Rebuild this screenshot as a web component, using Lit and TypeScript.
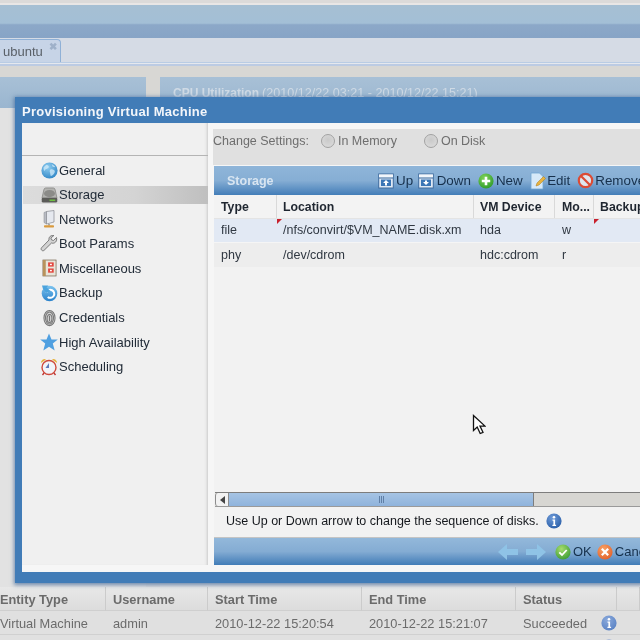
import { LitElement, html, css, svg } from "lit";
import { customElement } from "lit/decorators.js";

const disc = (id: string, a: string, b: string, inner: unknown, size = 16) => html`<svg class="ico" width=${size} height=${size} viewBox="0 0 16 16">
  <defs><radialGradient id=${id} cx="40%" cy="30%" r="75%"><stop offset="0" stop-color=${a}/><stop offset="1" stop-color=${b}/></radialGradient></defs>
  <circle cx="8" cy="8" r="7.6" fill="url(#${id})"/>${inner}</svg>`;

const winIcon = (down: boolean) => html`<svg class="ico" width="16" height="16" viewBox="0 0 16 16">
  <rect x="0.7" y="1" width="14.6" height="14" fill="#dfe9f4" stroke="#3f6c9e"/>
  <rect x="1" y="1.5" width="14" height="3" fill="#f2f6fb"/><path d="M1 5h14" stroke="#3f6c9e"/>
  <rect x="3" y="6.5" width="10" height="6.5" fill="#3a76b6"/>
  <path d=${down ? "M8 12l-3-3h2V7.5h2V9h2z" : "M8 7l3 3H9v2.5H7V10H5z"} fill="#fff"/></svg>`;

const infoGlyph = svg`<circle cx="8" cy="4.300" r="1.300" fill="#fff"/><path d="M6.500 6.600h2.600v5.200h1v1.200H6.400v-1.200h1V7.800h-.9z" fill="#fff"/>`;

const icons: Record<string, unknown> = {
  globe: disc("gl", "#8fcdf0", "#2f86c6", svg`<path d="M5 2.500c2 .5 3 1.500 2 3S4 6.500 3.500 8 2 6 2.500 5zM9 7c2-.5 4 .5 4 2s-1.500 3.500-3 4-1-2-1.500-3S8 7.500 9 7zM10 2c1.500.5 3 1.500 3.500 3l-2.500-.5z" fill="#d4ecfa" opacity=".75"/>`, 17),
  disk: html`<svg class="ico" width="17" height="18" viewBox="0 0 18 18">
    <path d="M3 3.500Q3.500 1.500 5 1.500h8q1.500 0 2 2l2 9H1z" fill="#b3b3b0" stroke="#6d6d6a" stroke-width=".6"/>
    <ellipse cx="9" cy="7.500" rx="5.800" ry="3.800" fill="#8b8b88"/>
    <rect x="0.800" y="12" width="16.400" height="5" rx="1.500" fill="#5b5b58"/>
    <rect x="9" y="13.800" width="6" height="1.600" fill="#6fc043"/></svg>`,
  net: html`<svg class="ico" width="18" height="18" viewBox="0 0 18 18">
    <path d="M6.500 1.500l7.500-1v11.500l-7.500 2z" fill="#e6e9ef" stroke="#85888f" stroke-width=".7"/>
    <path d="M4 2.500l2.500-1v12.500l-2.500-1.500z" fill="#b9bcc4" stroke="#85888f" stroke-width=".5"/>
    <path d="M9 14v1.500" stroke="#777" stroke-width="1.200"/>
    <rect x="4" y="15.300" width="10" height="2.200" rx=".8" fill="#d99a3d"/></svg>`,
  wrench: html`<svg class="ico" width="18" height="18" viewBox="0 0 18 18">
    <path d="M16.500 2.500l-3 3-2-.6-.6-2 3-2.400C11 0 8.500 1.800 9 5L1.500 12.800c-1.300 1.500.8 3.900 2.500 2.600L11.500 8c3 1 6-1.500 5-5.500z" fill="#d3d3d3" stroke="#6f6f6f" stroke-width=".9"/></svg>`,
  misc: html`<svg class="ico" width="15" height="18" viewBox="0 0 16 18">
    <rect x="1" y="0.500" width="14" height="17" fill="#e9e5da" stroke="#7b6a52" stroke-width=".8"/>
    <rect x="1" y="0.500" width="3" height="17" fill="#b8925c"/>
    <rect x="6.500" y="3" width="6" height="4.500" fill="#e2473f"/><rect x="6.500" y="9.500" width="6" height="4.500" fill="#e2473f"/>
    <rect x="8.500" y="4.500" width="2" height="1.500" fill="#fff"/><rect x="8.500" y="11" width="2" height="1.500" fill="#fff"/></svg>`,
  backup: html`<svg class="ico" width="17" height="18" viewBox="0 0 17 18">
    <defs><linearGradient id="bk" x1="0" y1="0" x2="0" y2="1"><stop offset="0" stop-color="#7cc3ef"/><stop offset="1" stop-color="#2a82cb"/></linearGradient></defs>
    <circle cx="8.500" cy="9.500" r="7.800" fill="url(#bk)"/>
    <path d="M5.500 8.500a4 4 0 1 1 1.200 4.400" fill="none" stroke="#fff" stroke-width="2"/>
    <path d="M1 1.500h6.500L5.500 3.500l4 3.500L5.500 9 2 5z" fill="#4ba3dd"/></svg>`,
  finger: html`<svg class="ico" width="13" height="18" viewBox="0 0 14 18" fill="none" stroke="#777" stroke-width="1.100">
    <ellipse cx="7" cy="9" rx="6" ry="8.200" fill="#cfcfcf"/><ellipse cx="7" cy="9" rx="4.300" ry="6.400"/><ellipse cx="7" cy="9.500" rx="2.600" ry="4.300"/><path d="M7 6.500v6"/></svg>`,
  star: html`<svg class="ico" width="18" height="18" viewBox="0 0 18 18"><path d="M9 .5l2.500 6h6.300l-5 4.100 1.900 6.900L9 13.700l-5.700 3.800 1.900-6.900-5-4.100h6.300z" fill="#4f9fe0"/></svg>`,
  clock: html`<svg class="ico" width="18" height="18" viewBox="0 0 18 18">
    <path d="M1 5a3.500 3.500 0 0 1 5-3.500zM17 5a3.500 3.500 0 0 0-5-3.500z" fill="#e6b23c"/>
    <path d="M4 15l-1.500 2M14 15l1.500 2" stroke="#b33" stroke-width="1.300"/>
    <circle cx="9" cy="9.500" r="7" fill="#f1f3f8" stroke="#cf4a3c" stroke-width="1.400"/>
    <path d="M9 5v5H5.500z" fill="#5d79b8"/></svg>`,
  up: winIcon(false),
  down: winIcon(true),
  plus: disc("pl", "#7fd35a", "#2f9a2a", svg`<path d="M6.700 3.800h2.600v2.900h2.900v2.600H9.300v2.900H6.700V9.300H3.800V6.700h2.900z" fill="#fff"/>`),
  edit: html`<svg class="ico" width="16" height="18" viewBox="0 0 16 18">
    <path d="M1 1h8.500L13 4.500V17H1z" fill="#d6e9f8" stroke="#6fa4d0" stroke-width=".8"/>
    <path d="M6 14l1-3 6.500-6.500 2 2L9 13z" fill="#e8b33f" stroke="#a77b1f" stroke-width=".5"/></svg>`,
  ban: html`<svg class="ico" width="17" height="17" viewBox="0 0 17 17">
    <circle cx="8.500" cy="8.500" r="6.700" fill="#dfe6ee" stroke="#dc4b34" stroke-width="2.200"/>
    <path d="M4 4l9 9" stroke="#dc4b34" stroke-width="2.200"/></svg>`,
  ok: disc("okg", "#a6dc6e", "#3c9c35", svg`<path d="M4.300 8.300l2.700 2.700 4.700-5" fill="none" stroke="#fff" stroke-width="1.800"/>`),
  cancel: disc("cn", "#f8a266", "#e2602a", svg`<path d="M4.800 4.800l6.400 6.400M11.200 4.800l-6.400 6.400" stroke="#fff" stroke-width="2.200"/>`),
  info: disc("inf", "#6f9bd8", "#2a5ea8", infoGlyph),
  infoDim: disc("ind", "#8aa9db", "#5a82c4", infoGlyph),
};

const nav: [string, string][] = [
  ["globe", "General"], ["disk", "Storage"], ["net", "Networks"], ["wrench", "Boot Params"], ["misc", "Miscellaneous"],
  ["backup", "Backup"], ["finger", "Credentials"], ["star", "High Availability"], ["clock", "Scheduling"],
];

@customElement("app-root")
export class AppRoot extends LitElement {
  static styles = css`
    :host { display: block; width: 640px; height: 640px; overflow: hidden; position: relative; background: #d8d7d4;
      font: 13px "Liberation Sans", Arial, sans-serif; }
    .soft { width: 640px; height: 640px; filter: blur(0.35px); position: relative; overflow: hidden; }
    .page { display: flex; flex-direction: column; height: 640px; overflow: hidden; }
    .ico { flex: none; display: block; }
    .topline { height: 5px; background: linear-gradient(#dcdad9 0 60%, #e9e6e5 60%); flex: none; }
    .banner { height: 33px; flex: none; background: linear-gradient(#a6bfd3 0, #a3bfd6 55%, #8ca8c8 60%, #87a4c6 100%); }
    .tabs { height: 24px; flex: none; background: #d5dbe5; padding-top: 1px; box-sizing: border-box; display: flex; }
    .tab { width: 61px; height: 23px; box-sizing: border-box; background: #c7d4e7; border: solid #8fb0d6; border-width: 1px 1px 0 0;
      border-top-right-radius: 4px; display: flex; align-items: center; padding-left: 3px; color: #5a6068; font-size: 13px; gap: 6px; }
    .tab i { font-style: normal; font-size: 10px; color: #9fb1c9; font-weight: bold; align-self: flex-start; margin-top: 1px; }
    .rule { height: 4px; flex: none; background: linear-gradient(#b9cce4 0 25%, #e5e8ee 25% 60%, #bccbe3 60%); }
    .content { height: 521px; flex: none; display: flex; gap: 14px; padding-top: 11px; box-sizing: border-box; background: linear-gradient(#d8d7d4 0 120px, #dedede 120px); }
    .panel { background: #e2e2e2; }
    .panel.l { width: 146px; }
    .panel.r { flex: 1; }
    .phead { height: 31px; background: linear-gradient(#a8c0d6, #9ab6d0); padding: 9px 0 0 13px; box-sizing: border-box; color: #cfdae5; font-size: 12.6px; white-space: nowrap; display: flex; align-items: baseline; gap: 3px; }
    .phead b { font-size: 12px; }
    .grid { flex: none; display: grid; grid-template-columns: 106px 102px 154px 154px 101px 1fr; background: #e0e0e0; color: #6b6b6b; font-size: 12.8px; }
    .grid > div { height: 24px; display: flex; align-items: center; box-sizing: border-box; white-space: nowrap; padding-left: 7px; }
    .grid .h { font-weight: bold; background: linear-gradient(#e8e8e8, #dcdcdc); border-bottom: 1px solid #cfcfcf; border-right: 1px solid #cbcbcb; padding-top: 2px; }
    .grid .c { border-bottom: 1px solid #d0d0d0; padding-top: 1px; }
    .grid .first { padding-left: 0; }
    .grid .st { justify-content: space-between; }

    .dialog { position: absolute; left: 15px; top: 97px; width: 700px; height: 486px; background: #417cb7; box-shadow: 0 1px 4px 1px rgba(60,100,150,.7);
      padding: 0 0 11px 7px; box-sizing: border-box; display: flex; flex-direction: column; }
    .title { height: 26px; flex: none; color: #f3f6fa; font-weight: bold; font-size: 13px; letter-spacing: .26px; display: flex; align-items: center; padding-top: 2px; box-sizing: border-box; }
    .body { flex: 1; display: flex; background: #f6f6f6; min-height: 0; }
    .side { width: 186px; flex: none; background: #f0f0f0; box-shadow: inset -3px 0 3px -2px #c8c8c8; height: 442px; padding-left: 1px; box-sizing: border-box; }
    .sidetop { height: 33px; border-bottom: 1px solid #b4b4b4; box-sizing: border-box; margin: 0 0 5px -1px; }
    .nav { display: flex; flex-direction: column; gap: 6.6px; color: #222c38; font-size: 13px; }
    .item { height: 18px; display: flex; align-items: center; padding-left: 17px; gap: 1px; }
    .item .slot { width: 18px; display: flex; justify-content: center; }
    .item.on { background: linear-gradient(90deg, #dcdcdc, #d4d4d4 60%, #bfbfbf); }
    .main { flex: 1; display: flex; flex-direction: column; padding-left: 5px; min-width: 0; }
    .form { margin-top: 6px; height: 36px; flex: none; background: #e0e0e0; display: flex; align-items: flex-start; padding-top: 5px; color: #6e6e6e; font-size: 12.5px; white-space: nowrap; margin-bottom: 1px; box-sizing: border-box; }
    .radio { width: 12px; height: 12px; border-radius: 50%; border: 1px solid #a2a2a2; background: radial-gradient(circle at 50% 40%, #c9c9c9, #dedede); flex: none; margin-right: 3px; }
    .r1, .r2 { display: flex; align-items: center; }
    .r1 { margin-left: 12px; width: 103px; }
    .store { margin-left: 1px; display: flex; flex-direction: column; background: #f2f2f2; height: 399px; flex: none; }
    .shead { height: 29px; flex: none; background: linear-gradient(#8fb5d9, #86aed4 50%, #437db8); display: flex; align-items: center; color: #16304c; font-size: 13.4px; }
    .shead .name { color: #d8e5f1; font-weight: bold; font-size: 12.5px; margin-left: 13px; width: 151px; }
    .tool { display: flex; align-items: center; gap: 2px; white-space: nowrap; }
    .t-up { margin-right: 4.5px; }
    .t-down { gap: 3px; margin-right: 7px; }
    .t-new { margin-right: 7.5px; }
    .t-edit { gap: 1px; margin-right: 7px; }
    .t-ban { gap: 1px; }
    .cols, .row { display: grid; grid-template-columns: 63px 197px 81px 39px 1fr; }
    .cols { height: 24px; flex: none; background: #f3f3f3; font-weight: bold; color: #1f2630; font-size: 12.3px; border-bottom: 1px solid #e4e4e4; box-sizing: border-box; }
    .cols > div { display: flex; align-items: center; padding-left: 6px; border-right: 1px solid #d9d9d9; white-space: nowrap; overflow: hidden; }
    .row { height: 24px; flex: none; font-size: 12.5px; color: #303842; }
    .row > div { display: flex; align-items: center; padding-left: 6px; white-space: nowrap; position: relative; }
    .cols > div:first-child, .row > div:first-child, .cols > div:nth-child(4), .row > div:nth-child(4) { padding-left: 7px; }
    .row.a { background: #e2e9f4; border-bottom: 1px solid #f5f5f5; box-sizing: border-box; padding-bottom: 1px; }
    .row.b { background: #ededed; }
    .flag::before { content: ""; position: absolute; left: 0; top: 0; border: solid transparent; border-width: 5px 5px 0 0; border-top-color: #c8202c; }
    .grow { flex: 1; }
    .scroll { height: 15px; flex: none; margin-left: 1px; display: flex; border-top: 1px solid #7d7d7d; border-bottom: 1px solid #9a9a9a; box-sizing: border-box; background: #d7d6d2; }
    .sbtn { width: 14px; background: #f2f2f2; display: flex; align-items: center; justify-content: center; border: 1px solid #8c8c8c; border-width: 0 1px; box-sizing: border-box; border-radius: 3px 0 0 3px; }
    .sbtn span { border: solid transparent; border-width: 4px 5px 4px 0; border-right-color: #444; }
    .thumb { width: 305px; background: linear-gradient(#a6c4e4, #8fb3dc); border-right: 1px solid #7d7d7d; box-sizing: border-box; display: flex; align-items: center; justify-content: center; gap: 1px; }
    .thumb u { width: 1px; height: 7px; background: #5f7fa6; display: block; }
    .note { height: 31px; flex: none; display: flex; align-items: center; padding: 0 0 3px 12px; box-sizing: border-box; color: #15181d; font-size: 12.5px; gap: 7px; border-bottom: 1px solid #c4c4c4; white-space: nowrap; }
    .foot { height: 27px; flex: none; background: linear-gradient(#93b8da, #84acd3 50%, #417cb7); display: flex; align-items: center; padding-left: 284px; color: #15304c; font-size: 13px; box-sizing: border-box; }
    .arrows { display: flex; gap: 8px; margin-right: 9px; }
    .t-ok { margin-right: 5px; }
    .cursor { position: absolute; left: 472px; top: 414px; }
  `;

  render() {
    return html`<div class="soft">
      <div class="page">
        <div class="topline"></div>
        <div class="banner"></div>
        <div class="tabs"><div class="tab">ubuntu <i>✖</i></div></div>
        <div class="rule"></div>
        <div class="content">
          <div class="panel l"><div class="phead"></div></div>
          <div class="panel r"><div class="phead"><b>CPU Utilization</b><span>(2010/12/22 03:21 - 2010/12/22 15:21)</span></div></div>
        </div>
        <div class="grid">
          <div class="h first">Entity Type</div><div class="h">Username</div><div class="h">Start Time</div><div class="h">End Time</div><div class="h">Status</div><div class="h"></div>
          <div class="c first">Virtual Machine</div><div class="c">admin</div><div class="c">2010-12-22 15:20:54</div><div class="c">2010-12-22 15:21:07</div><div class="c st">Succeeded ${icons.infoDim}</div><div class="c"></div>
          <div class="c"></div><div class="c"></div><div class="c"></div><div class="c"></div><div class="c st"><span></span>${icons.infoDim}</div><div class="c"></div>
        </div>
      </div>

      <div class="dialog">
        <div class="title">Provisioning Virtual Machine</div>
        <div class="body">
          <div class="side">
            <div class="sidetop"></div>
            <div class="nav">
              ${nav.map(([i, t]) => html`<div class="item ${t === "Storage" ? "on" : ""}"><span class="slot">${icons[i]}</span>${t}</div>`)}
            </div>
          </div>
          <div class="main">
            <div class="form">
              <span>Change Settings:</span>
              <span class="r1"><span class="radio"></span>In Memory</span>
              <span class="r2"><span class="radio"></span>On Disk</span>
            </div>
            <div class="store">
              <div class="shead">
                <span class="name">Storage</span>
                <span class="tool t-up">${icons.up}Up</span>
                <span class="tool t-down">${icons.down}Down</span>
                <span class="tool t-new">${icons.plus}New</span>
                <span class="tool t-edit">${icons.edit}Edit</span>
                <span class="tool t-ban">${icons.ban}Remove</span>
              </div>
              <div class="cols"><div>Type</div><div>Location</div><div>VM Device</div><div>Mo...</div><div>Backup</div></div>
              <div class="row a"><div>file</div><div class="flag">/nfs/convirt/$VM_NAME.disk.xm</div><div>hda</div><div>w</div><div class="flag"></div></div>
              <div class="row b"><div>phy</div><div>/dev/cdrom</div><div>hdc:cdrom</div><div>r</div><div></div></div>
              <div class="grow"></div>
              <div class="scroll"><div class="sbtn"><span></span></div><div class="thumb"><u></u><u></u><u></u></div></div>
              <div class="note">Use Up or Down arrow to change the sequence of disks. ${icons.info}</div>
              <div class="foot">
                <span class="arrows">
                  <svg class="ico" width="20" height="18" viewBox="0 0 20 18"><path d="M0 9l9-8v5h11v6H9v5z" fill="#8fc3e6"/></svg>
                  <svg class="ico" width="20" height="18" viewBox="0 0 20 18"><path d="M20 9l-9-8v5H0v6h11v5z" fill="#8fc3e6"/></svg>
                </span>
                <span class="tool t-ok">${icons.ok}OK</span>
                <span class="tool">${icons.cancel}Cancel</span>
              </div>
            </div>
          </div>
        </div>
      </div>

      <svg class="cursor" width="14" height="22" viewBox="0 0 14 22"><path d="M1.500 1.500v15l3.700-3.500 3 6.500 2.800-1.200-3-6.200h5z" fill="#fff" stroke="#111" stroke-width="1.300"/></svg>
    </div>`;
  }
}
